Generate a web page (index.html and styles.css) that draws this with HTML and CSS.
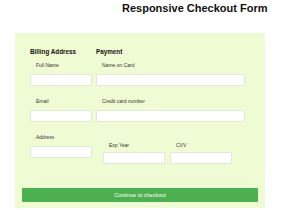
FILE: index.html
```html
<!doctype html>
<html lang="en">
<head>
  <meta charset="UTF-8">
  <title>Responsive Checkout Form</title>
  <link rel="stylesheet" href="styles.css">
</head>
<body>
  <h1 class="title">Responsive Checkout Form</h1>
  <div class="box">
    <div class="cols">
      <div class="col col-left">
        <h3>Billing Address</h3>
        <label>Full Name</label>
        <input type="text">
        <label class="next">Email</label>
        <input type="text">
        <label class="next">Address</label>
        <input type="text">
      </div>
      <div class="col col-right">
        <h3>Payment</h3>
        <label>Name on Card</label>
        <input type="text">
        <label class="next">Credit card number</label>
        <input type="text">
        <div class="row">
          <div class="half">
            <label>Exp Year</label>
            <input type="text">
          </div>
          <div class="half">
            <label>CVV</label>
            <input type="text">
          </div>
        </div>
      </div>
    </div>
    <div class="btn">Continue to checkout</div>
  </div>
</body>
</html>
```

FILE: styles.css
```css
body {
    margin: 0;
    background: #fff;
    font-family: "Liberation Sans", Arial, sans-serif;
    color: #222;
}

.title {
    margin: 2px 0 0;
    padding-left: 122px;
    font-size: 11px;
    line-height: 13px;
    font-weight: bold;
    color: #111;
}

.box {
    box-sizing: border-box;
    width: 250px;
    margin: 18px 0 0 15px;
    padding: 15px 7px 6px;
    background: #effcd3;
}

.cols {
    display: flex;
    gap: 4px;
    padding-left: 8px;
}

.col {
    display: flex;
    flex-direction: column;
}

.col-left {
    width: 62px;
}

.col-right {
    width: 149px;
}

h3 {
    margin: 0 0 6px;
    font-size: 6.3px;
    line-height: 8px;
    height: 8px;
    white-space: nowrap;
    color: #111;
}

label {
    display: block;
    margin-left: 6px;
    font-size: 5px;
    line-height: 6px;
    height: 6px;
    white-space: nowrap;
    color: #333;
}

label.next {
    margin-top: 12px;
}

input {
    box-sizing: border-box;
    display: block;
    width: 100%;
    height: 12px;
    margin: 6px 0 0;
    padding: 0;
    border: 1px solid #e4e8dc;
    border-radius: 1px;
    background: #fff;
}

.row {
    display: flex;
    gap: 5px;
    margin-top: 20px;
    padding-left: 7px;
}

.half {
    width: 62px;
}

.half input {
    margin-top: 4px;
}

.btn {
    margin-top: 24px;
    height: 14px;
    line-height: 14px;
    text-align: center;
    font-size: 5.5px;
    color: #fff;
    background: #4caf50;
    border-radius: 1px;
}
```
